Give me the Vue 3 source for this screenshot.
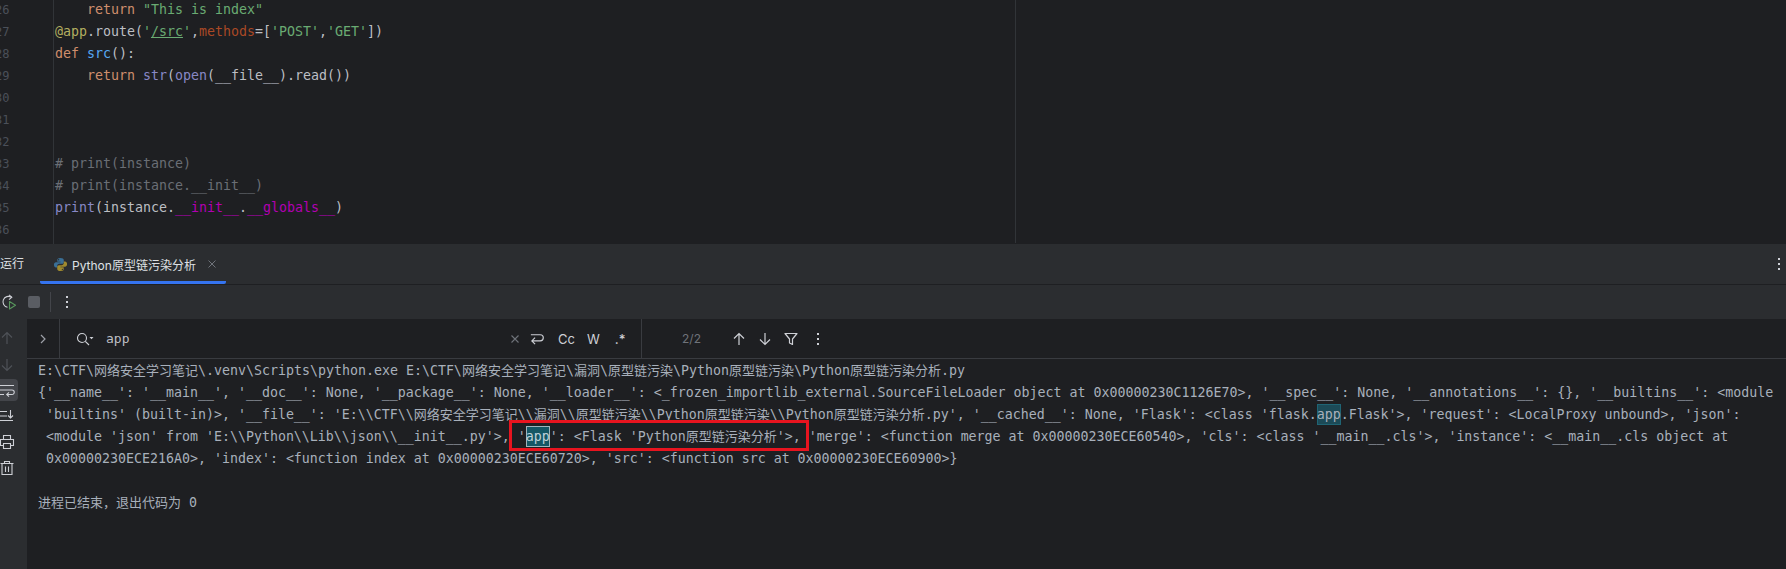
<script setup>
const lineNumbers = [26, 27, 28, 29, 30, 31, 32, 33, 34, 35, 36]
</script>

<template>
  <div class="ide">
    <section class="editor">
      <div class="gutter">
        <div v-for="n in lineNumbers" :key="n" class="ln">{{ n }}</div>
      </div>
      <div class="code">
        <div class="cl indent"><span class="kw">return</span> <span class="str">"This is index"</span></div>
        <div class="cl"><span class="deco">@app</span>.route(<span class="str">'<u>/src</u>'</span>,<span class="arg">methods</span>=[<span class="str">'POST'</span>,<span class="str">'GET'</span>])</div>
        <div class="cl"><span class="kw">def</span> <span class="fn">src</span>():</div>
        <div class="cl indent"><span class="kw">return</span> <span class="bi">str</span>(<span class="bi">open</span>(__file__).read())</div>
        <div class="cl"> </div>
        <div class="cl"> </div>
        <div class="cl"> </div>
        <div class="cl cm"># print(instance)</div>
        <div class="cl cm"># print(instance.__init__)</div>
        <div class="cl"><span class="bi">print</span>(instance.<span class="magic">__init__</span>.<span class="magic">__globals__</span>)</div>
        <div class="cl"> </div>
      </div>
      <div class="margin-line"></div>
    </section>

    <header class="tabbar">
      <span class="run-label">运行</span>
      <div class="tab">
        <svg class="py" viewBox="0 0 16 16" width="15" height="15">
          <path fill="#3a6f96" d="M7.9 1C5 1 4.6 2.2 4.6 3.2V5h3.5v.6H3.2C1.9 5.600 1 6.600 1 8.300s.9 2.900 2.200 2.900h1.300V9.500c0-1.200 1-2.200 2.200-2.200h3c1 0 1.800-.8 1.800-1.800V3.200C11.500 2 10.300 1 7.900 1zM6 2.200a.7.700 0 1 1 0 1.400.7.700 0 0 1 0-1.400z"/>
          <path fill="#a08a2e" d="M8.100 15c2.900 0 3.300-1.200 3.300-2.200V11H7.900v-.6h4.900c1.300 0 2.200-1 2.200-2.700s-.9-2.900-2.200-2.900h-1.300v1.700c0 1.200-1 2.200-2.200 2.200h-3c-1 0-1.800.8-1.800 1.800v2.300C4.500 14 5.700 15 8.100 15zM10 13.800a.7.700 0 1 1 0-1.400.7.700 0 0 1 0 1.400z"/>
        </svg>
        <span class="tab-title">Python原型链污染分析</span>
        <svg class="tab-close" viewBox="0 0 10 10" width="10" height="10"><path d="M1.500 1.500l7 7M8.500 1.500l-7 7" stroke="#6f737a" stroke-width="1" fill="none"/></svg>
      </div>
      <div class="tab-spacer"></div>
      <div class="kebab tab-kebab"><i></i><i></i><i></i></div>
    </header>

    <div class="toolbar">
      <svg class="rerun" viewBox="0 0 16 16" width="16" height="16">
        <path d="M10.500 3.300A5.500 5.500 0 1 0 6.500 13.300" stroke="#ced0d6" stroke-width="1.100" fill="none"/>
        <path d="M8 .8l2.800 2.400L8 5.600" stroke="#ced0d6" stroke-width="1.100" fill="none"/>
        <path d="M8.500 7.500v7.500l6-3.750z" stroke="#57965c" stroke-width="1.100" fill="none" stroke-linejoin="round"/>
      </svg>
      <span class="stop"></span>
      <span class="tb-div"></span>
      <div class="kebab"><i></i><i></i><i></i></div>
    </div>

    <div class="run-body">
      <aside class="strip">
        <svg class="s-up" viewBox="0 0 16 16" width="16" height="16"><path d="M8 14V2.500M3 7.500l5-5 5 5" stroke="#4e5157" stroke-width="1.200" fill="none"/></svg>
        <svg class="s-down" viewBox="0 0 16 16" width="16" height="16"><path d="M8 2v11.500M3 8.500l5 5 5-5" stroke="#4e5157" stroke-width="1.200" fill="none"/></svg>
        <div class="s-active">
          <svg viewBox="0 0 16 16" width="16" height="16"><path d="M1 3.500h14M1 8h12a2.200 2.200 0 0 1 0 4.500H8M10 10.300l-2.300 2.200 2.300 2.200M1 12.500h4" stroke="#ced0d6" stroke-width="1.100" fill="none"/></svg>
        </div>
        <svg class="s-end" viewBox="0 0 16 16" width="16" height="16"><path d="M1 3.500h7M1 8h7M1 12.500h13M11.500 2v8M9 7.500l2.500 2.500L14 7.500" stroke="#ced0d6" stroke-width="1.100" fill="none"/></svg>
        <svg class="s-print" viewBox="0 0 16 16" width="16" height="16"><path d="M4.500 5.500V1.500h7v4M4 11.500H1.500v-6h13v6H12M4.500 9.500h7v5h-7z" stroke="#ced0d6" stroke-width="1.100" fill="none"/></svg>
        <svg class="s-trash" viewBox="0 0 16 16" width="16" height="16"><path d="M1.500 3.500h13M5.500 3.500V1.500h5v2M3 3.500v11h10v-11M6.500 6.500v5.500M9.500 6.500v5.500" stroke="#ced0d6" stroke-width="1.100" fill="none"/></svg>
      </aside>

      <main class="console">
        <div class="searchbar">
          <div class="expand">
            <svg viewBox="0 0 10 10" width="10" height="10"><path d="M3 1l4 4-4 4" stroke="#9da0a8" stroke-width="1.200" fill="none"/></svg>
          </div>
          <div class="search-input">
            <svg class="mag" viewBox="0 0 18 14" width="18" height="14"><circle cx="6" cy="6" r="4.500" stroke="#ced0d6" stroke-width="1.100" fill="none"/><path d="M9.300 9.300L13 13" stroke="#ced0d6" stroke-width="1.100"/><path d="M13.500 5h4l-2 2.200z" fill="#ced0d6"/></svg>
            <span class="query">app</span>
            <svg class="clear" viewBox="0 0 10 10" width="10" height="10"><path d="M1.500 1.500l7 7M8.500 1.500l-7 7" stroke="#6f737a" stroke-width="1.100" fill="none"/></svg>
            <svg class="wrap" viewBox="0 0 16 14" width="15" height="14"><path d="M2 2.500h10a3 3 0 0 1 0 6.500H3M6.500 5.500L3 9l3.500 3.500" stroke="#ced0d6" stroke-width="1.200" fill="none"/></svg>
            <span class="opt cc">Cc</span>
            <span class="opt w">W</span>
            <span class="opt re">.*</span>
          </div>
          <div class="search-nav">
            <span class="count">2/2</span>
            <svg class="n-up" viewBox="0 0 14 14" width="14" height="14"><path d="M7 13V1.500M2 6.500l5-5 5 5" stroke="#ced0d6" stroke-width="1.200" fill="none"/></svg>
            <svg class="n-down" viewBox="0 0 14 14" width="14" height="14"><path d="M7 1v11.500M2 7.500l5 5 5-5" stroke="#ced0d6" stroke-width="1.200" fill="none"/></svg>
            <svg class="n-filter" viewBox="0 0 14 14" width="14" height="14"><path d="M1 1.500h12L8.500 7v5.500L5.500 11V7z" stroke="#ced0d6" stroke-width="1.200" fill="none" stroke-linejoin="round"/></svg>
            <div class="kebab n-kebab"><i></i><i></i><i></i></div>
          </div>
        </div>

        <div class="output">
          <div class="ol">E:\CTF\<span class="cjk">网络安全学习笔记</span>\.venv\Scripts\python.exe E:\CTF\<span class="cjk">网络安全学习笔记</span>\<span class="cjk">漏洞</span>\<span class="cjk">原型链污染</span>\Python<span class="cjk">原型链污染</span>\Python<span class="cjk">原型链污染分析</span>.py</div>
          <div class="ol">{'__name__': '__main__', '__doc__': None, '__package__': None, '__loader__': &lt;_frozen_importlib_external.SourceFileLoader object at 0x00000230C1126E70&gt;, '__spec__': None, '__annotations__': {}, '__builtins__': &lt;module</div>
          <div class="ol"> 'builtins' (built-in)&gt;, '__file__': 'E:\\CTF\\<span class="cjk">网络安全学习笔记</span>\\<span class="cjk">漏洞</span>\\<span class="cjk">原型链污染</span>\\Python<span class="cjk">原型链污染</span>\\Python<span class="cjk">原型链污染分析</span>.py', '__cached__': None, 'Flask': &lt;class 'flask.<span class="hit">app</span>.Flask'&gt;, 'request': &lt;LocalProxy unbound&gt;, 'json':</div>
          <div class="ol"> &lt;module 'json' from 'E:\\Python\\Lib\\json\\__init__.py'&gt;, '<span class="hit current">app</span>': &lt;Flask 'Python<span class="cjk">原型链污染分析</span>'&gt;, 'merge': &lt;function merge at 0x00000230ECE60540&gt;, 'cls': &lt;class '__main__.cls'&gt;, 'instance': &lt;__main__.cls object at</div>
          <div class="ol"> 0x00000230ECE216A0&gt;, 'index': &lt;function index at 0x00000230ECE60720&gt;, 'src': &lt;function src at 0x00000230ECE60900&gt;}</div>
          <div class="ol"> </div>
          <div class="ol"><span class="cjk">进程已结束，退出代码为</span> 0</div>
        </div>
      </main>
    </div>

    <div class="annotation"></div>
  </div>
</template>

<style>
html, body { margin: 0; background: #1e1f22; }
</style>

<style scoped>
.ide {
  position: relative;
  width: 1786px;
  height: 569px;
  overflow: hidden;
  display: flex;
  flex-direction: column;
  background: #1e1f22;
  font-family: "DejaVu Sans Mono", "Noto Sans CJK SC", monospace;
}

/* editor */
.editor {
  position: relative;
  height: 244px;
  flex: none;
  display: flex;
  overflow: hidden;
}
.gutter {
  width: 53px;
  flex: none;
  border-right: 1px solid #313438;
  box-sizing: content-box;
  margin-top: -1px;
  overflow: hidden;
}
.ln {
  height: 22px;
  line-height: 22px;
  font-size: 12px;
  color: #4b5059;
  margin-left: -5px;
}
.code {
  margin-top: -1px;
  padding-left: 1px;
  color: #bcbec4;
  font-size: 13.295px;
}
.cl {
  height: 22px;
  line-height: 22px;
  white-space: pre;
}
.indent { padding-left: 32px; }
.kw { color: #cf8e6d; }
.str { color: #6aab73; }
.deco { color: #b3ae60; }
.arg { color: #aa4926; }
.fn { color: #56a8f5; }
.bi { color: #8888c6; }
.magic { color: #b200b2; }
.cm { color: #6a6e75; }
.margin-line {
  position: absolute;
  left: 1015px;
  top: 0;
  bottom: 1px;
  width: 1px;
  background: #313438;
}

/* tab bar */
.tabbar {
  height: 40px;
  flex: none;
  display: flex;
  align-items: stretch;
  background: #2b2d30;
  border-bottom: 1px solid #1e1f22;
  font-family: Inter, "Noto Sans CJK SC", sans-serif;
}
.run-label {
  width: 40px;
  flex: none;
  line-height: 40px;
  font-size: 12px;
  color: #dfe1e5;
}
.tab {
  width: 186px;
  flex: none;
  display: flex;
  align-items: center;
  box-sizing: border-box;
  padding-left: 13px;
  border-bottom: 3px solid #3574f0;
  border-radius: 0 0 2px 2px;
  padding-top: 3px;
}
.py { flex: none; }
.tab-title {
  margin-left: 4px;
  font-size: 12px;
  color: #dfe1e5;
  white-space: nowrap;
}
.tab-close { margin-left: 11px; flex: none; }
.tab-spacer { flex: 1; }
.kebab {
  display: flex;
  flex-direction: column;
  align-items: center;
  justify-content: center;
  gap: 3px;
}
.kebab i {
  width: 2px;
  height: 2px;
  background: #ced0d6;
}
.tab-kebab { width: 14px; }

/* toolbar */
.toolbar {
  height: 34px;
  flex: none;
  display: flex;
  align-items: center;
  background: #2b2d30;
  padding-left: 1px;
}
.rerun { flex: none; }
.stop {
  width: 12px;
  height: 12px;
  margin-left: 11px;
  border-radius: 2px;
  background: #5a5d63;
}
.tb-div {
  width: 1px;
  height: 20px;
  margin: 0 15px 0 10px;
  background: #43454a;
}

/* run body */
.run-body {
  flex: 1;
  min-height: 0;
  display: flex;
}
.strip {
  width: 27px;
  flex: none;
  box-sizing: border-box;
  background: #2b2d30;
  display: flex;
  flex-direction: column;
  align-items: flex-start;
  padding-top: 11px;
}
.s-up, .s-down, .s-end, .s-print, .s-trash { margin-left: -1px; flex: none; }
.s-down { margin-top: 11px; }
.s-active {
  width: 18px;
  height: 22px;
  margin-top: 6px;
  background: #43454a;
  border-radius: 0 4px 4px 0;
  display: flex;
  align-items: center;
  justify-content: flex-start;
}
.s-active svg { margin-left: -1px; flex: none; }
.s-end { margin-top: 7px; }
.s-print { margin-top: 10px; }
.s-trash { margin-top: 10px; }

.console {
  flex: 1;
  min-width: 0;
  display: flex;
  flex-direction: column;
}
.searchbar {
  height: 39px;
  flex: none;
  display: flex;
  border-bottom: 1px solid #393b40;
  box-sizing: content-box;
  color: #ced0d6;
}
.expand {
  width: 32px;
  flex: none;
  display: flex;
  align-items: center;
  justify-content: center;
  border-right: 1px solid #393b40;
}
.search-input {
  width: 582px;
  flex: none;
  display: flex;
  align-items: center;
  border-right: 1px solid #393b40;
  padding-left: 16px;
  box-sizing: border-box;
}
.mag { flex: none; }
.query {
  margin-left: 12px;
  font-size: 13px;
  color: #bcbec4;
  width: 404px;
  flex: none;
}
.clear { flex: none; }
.wrap { flex: none; margin-left: 9px; }
.opt {
  font-family: Inter, sans-serif;
  font-size: 13px;
  color: #ced0d6;
}
.cc { margin-left: 14px; }
.w { margin-left: 12px; }
.re { margin-left: 15px; font-weight: 500; }
.search-nav {
  flex: 1;
  display: flex;
  align-items: center;
  padding-left: 40px;
}
.count {
  font-family: Inter, sans-serif;
  font-size: 12px;
  color: #6f737a;
  width: 50px;
}
.n-up, .n-down, .n-filter { flex: none; margin-right: 12px; }
.n-kebab { margin-left: 7px; }

.output {
  padding: 1px 0 0 11px;
  font-size: 13.295px;
  color: #a8b0bb;
}
.cjk { font-size: 13px; }
.ol {
  height: 22px;
  line-height: 22px;
  white-space: pre;
}
.hit {
  background: #1c4a57;
  box-shadow: inset 0 0 0 1px #1f6474;
  padding: 3px 0;
}
.hit.current {
  background: #155765;
  box-shadow: inset 0 0 0 1px #9fb4bc;
  color: #bcd0d8;
}

.annotation {
  position: absolute;
  left: 509px;
  top: 420px;
  width: 300px;
  height: 31px;
  box-sizing: border-box;
  border: 3px solid #e8141f;
  pointer-events: none;
}
</style>
